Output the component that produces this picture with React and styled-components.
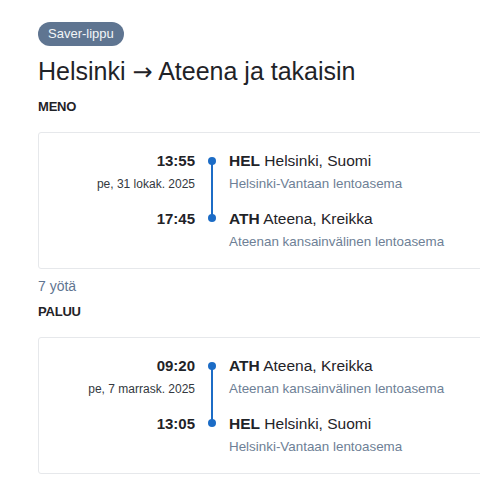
import React from 'react';
import styled, { createGlobalStyle } from 'styled-components';

const GlobalStyle = createGlobalStyle`
  body {
    margin: 0;
    background: #ffffff;
    font-family: "Liberation Sans", Arial, sans-serif;
    color: #1f2328;
    overflow: hidden;
  }
`;

const Page = styled.div`
  width: 640px;
  padding: 22px 38px;
  display: flex;
  flex-direction: column;
  align-items: flex-start;
`;

const Badge = styled.span`
  display: inline-block;
  height: 24px;
  line-height: 24px;
  padding: 0 10px;
  border-radius: 12px;
  background: #5f7591;
  color: #f3f5f8;
  font-size: 13px;
`;

const Title = styled.h1`
  margin: 10px 0 0;
  font-size: 25px;
  line-height: 30px;
  font-weight: 400;
  color: #1f2328;
`;

const Arrow = styled.span`
  font-family: "Noto Sans", "DejaVu Sans", sans-serif;
  font-size: 24px;
`;

const SectionLabel = styled.div`
  margin-top: ${(p) => p.$top}px;
  font-size: 13px;
  line-height: 18px;
  font-weight: 700;
  letter-spacing: -0.2px;
  color: #1f2328;
`;

const Nights = styled.div`
  margin-top: 7px;
  font-size: 14px;
  line-height: 20px;
  color: #5f7591;
`;

const Card = styled.div`
  align-self: stretch;
  margin-top: 16px;
  border: 1px solid #e6e8eb;
  border-radius: 3px;
  padding: 16px 16px 15px 0;
`;

const Stop = styled.div`
  display: grid;
  grid-template-columns: 156px 34px 1fr;
`;

const TimeCell = styled.div`
  text-align: right;
  padding-bottom: ${(p) => (p.$first ? 12 : 0)}px;
`;

const Time = styled.div`
  font-size: 15px;
  line-height: 24px;
  font-weight: 700;
  color: #1f2328;
`;

const DateText = styled.div`
  font-size: 12px;
  line-height: 22px;
  color: #333840;
`;

const Rail = styled.div`
  display: flex;
  flex-direction: column;
  align-items: center;
  padding-top: ${(p) => (p.$first ? 8 : 0)}px;
`;

const Dot = styled.span`
  width: 8px;
  height: 8px;
  border-radius: 50%;
  background: #1c6cc6;
  flex-shrink: 0;
`;

const Line = styled.span`
  width: 2px;
  background: #1c6cc6;
  ${(p) => (p.$grow ? 'flex: 1;' : 'height: 8px;')}
  margin: ${(p) => (p.$grow ? '-1px 0 0' : '0 0 -1px')};
`;

const InfoCell = styled.div`
  padding-bottom: ${(p) => (p.$first ? 12 : 0)}px;
`;

const Place = styled.div`
  font-size: 15.5px;
  line-height: 24px;
  color: #1f2328;

  b {
    font-weight: 700;
  }
`;

const Airport = styled.div`
  font-size: 13.4px;
  line-height: 22px;
  color: #6e7f96;
`;

const legs = [
  {
    label: 'MENO',
    date: 'pe, 31 lokak. 2025',
    stops: [
      { time: '13:55', code: 'HEL', city: 'Helsinki, Suomi', airport: 'Helsinki-Vantaan lentoasema' },
      { time: '17:45', code: 'ATH', city: 'Ateena, Kreikka', airport: 'Ateenan kansainvälinen lentoasema' },
    ],
  },
  {
    label: 'PALUU',
    date: 'pe, 7 marrask. 2025',
    stops: [
      { time: '09:20', code: 'ATH', city: 'Ateena, Kreikka', airport: 'Ateenan kansainvälinen lentoasema' },
      { time: '13:05', code: 'HEL', city: 'Helsinki, Suomi', airport: 'Helsinki-Vantaan lentoasema' },
    ],
  },
];

const LegCard = ({ leg }) => (
  <Card>
    {leg.stops.map((s, i) => {
      const first = i === 0;
      return (
        <Stop key={s.code}>
          <TimeCell $first={first}>
            <Time>{s.time}</Time>
            {first && <DateText>{leg.date}</DateText>}
          </TimeCell>
          <Rail $first={first}>
            {first ? (
              <>
                <Dot />
                <Line $grow />
              </>
            ) : (
              <>
                <Line />
                <Dot />
              </>
            )}
          </Rail>
          <InfoCell $first={first}>
            <Place>
              <b>{s.code}</b> {s.city}
            </Place>
            <Airport>{s.airport}</Airport>
          </InfoCell>
        </Stop>
      );
    })}
  </Card>
);

export default function App() {
  return (
    <>
      <GlobalStyle />
      <Page>
        <Badge>Saver-lippu</Badge>
        <Title>
          Helsinki <Arrow>→</Arrow> Ateena ja takaisin
        </Title>
        <SectionLabel $top={12}>{legs[0].label}</SectionLabel>
        <LegCard leg={legs[0]} />
        <Nights>7 yötä</Nights>
        <SectionLabel $top={7}>{legs[1].label}</SectionLabel>
        <LegCard leg={legs[1]} />
      </Page>
    </>
  );
}
